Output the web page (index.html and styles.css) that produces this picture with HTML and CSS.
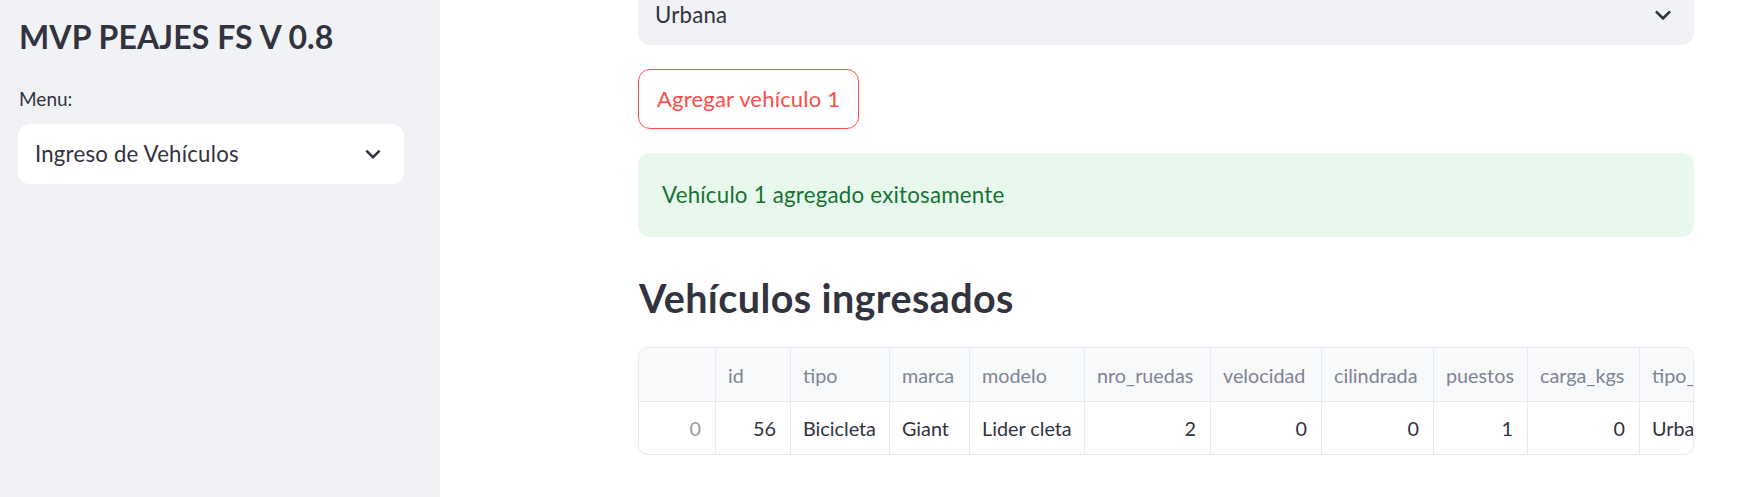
FILE: index.html
```html
<!DOCTYPE html>
<html lang="es">
<head>
<meta charset="utf-8">
<title>MVP PEAJES FS V 0.8</title>
<link rel="stylesheet" href="styles.css">
</head>
<body>
<div class="app">
  <aside class="sidebar">
    <h1 class="side-title">MVP PEAJES FS V 0.8</h1>
    <label class="side-label">Menu:</label>
    <div class="select select-white">
      <span class="select-value">Ingreso de Vehículos</span>
      <svg class="chev chev-side" viewBox="0 0 24 24" aria-hidden="true"><path d="M16.59 8.59L12 13.17 7.41 8.59 6 10l6 6 6-6z"/></svg>
    </div>
  </aside>
  <main class="main">
    <div class="block">
      <div class="select select-grey">
        <span class="select-value">Urbana</span>
        <svg class="chev" viewBox="0 0 24 24" aria-hidden="true"><path d="M16.59 8.59L12 13.17 7.41 8.59 6 10l6 6 6-6z"/></svg>
      </div>
      <div class="btn-row"><button class="btn">Agregar vehículo 1</button></div>
      <div class="alert-success">Vehículo 1 agregado exitosamente</div>
      <h3 class="subheader">Vehículos ingresados</h3>
      <div class="df">
        <div class="df-row df-head">
          <div class="cell"></div>
          <div class="cell">id</div>
          <div class="cell">tipo</div>
          <div class="cell">marca</div>
          <div class="cell">modelo</div>
          <div class="cell">nro_ruedas</div>
          <div class="cell">velocidad</div>
          <div class="cell">cilindrada</div>
          <div class="cell">puestos</div>
          <div class="cell">carga_kgs</div>
          <div class="cell">tipo_vehiculo</div>
        </div>
        <div class="df-row df-body">
          <div class="cell num idx">0</div>
          <div class="cell num">56</div>
          <div class="cell">Bicicleta</div>
          <div class="cell">Giant</div>
          <div class="cell">Lider cleta</div>
          <div class="cell num">2</div>
          <div class="cell num">0</div>
          <div class="cell num">0</div>
          <div class="cell num">1</div>
          <div class="cell num">0</div>
          <div class="cell">Urbana</div>
        </div>
      </div>
    </div>
  </main>
</div>
</body>
</html>
```
FILE: styles.css
```css
* { box-sizing: border-box; }
html, body { margin: 0; padding: 0; }
body {
  font-family: "Lato", "Open Sans", sans-serif;
  color: #31333f;
  background: #ffffff;
  overflow: hidden;
  height: 497px;
}
.app {
  display: flex;
  height: 100vh;
}
.sidebar {
  width: 440px;
  flex: 0 0 440px;
  background: #f0f2f6;
  padding: 17px 36px 0 18px;
  display: flex;
  flex-direction: column;
}
.side-title {
  margin: 0 0 0 1px;
  font-size: 32px;
  line-height: 40px;
  font-weight: 700;
  color: #31333f;
  letter-spacing: 0.1px;
}
.side-label {
  margin: 30px 0 0 1px;
  font-size: 19px;
  line-height: 24px;
  color: #31333f;
}
.select {
  display: flex;
  align-items: center;
  justify-content: space-between;
  height: 60px;
  border-radius: 12px;
  padding: 0 15px 0 17px;
  font-size: 22.2px;
  letter-spacing: 0.22px;
  line-height: 30px;
  color: #31333f;
}
.select-white {
  margin-top: 13px;
  background: #ffffff;
  padding-right: 16px;
}
.select-grey {
  background: #f0f2f6;
}
.chev {
  width: 32px;
  height: 32px;
  fill: #31333f;
  flex: 0 0 auto;
}
.chev-side {
  width: 30px;
  height: 30px;
}
.main {
  flex: 1;
  padding: 0 57px 0 198px;
}
.block {
  margin-top: -15px;
  display: flex;
  flex-direction: column;
}
.btn-row {
  margin-top: 24px;
  display: flex;
}
.btn {
  height: 60px;
  padding: 0 18px;
  border: 1px solid #ff4b4b;
  border-radius: 12px;
  background: #ffffff;
  color: #ff4b4b;
  font-family: "Lato", "Open Sans", sans-serif;
  font-size: 22px;
  letter-spacing: 0.2px;
  line-height: 30px;
}
.alert-success {
  margin-top: 24px;
  height: 84px;
  border-radius: 12px;
  background: #e8f8ed;
  color: #177233;
  font-size: 22.3px;
  letter-spacing: 0.22px;
  line-height: 30px;
  padding: 0 24px;
  display: flex;
  align-items: center;
}
.subheader {
  margin: 36px 0 0 1px;
  font-size: 39.5px;
  letter-spacing: 0.4px;
  line-height: 50px;
  font-weight: 700;
  color: #31333f;
}
.df {
  margin-top: 24px;
  border: 1px solid #e6e9ef;
  border-radius: 10px;
  overflow: hidden;
  width: 1056px;
}
.df-row {
  display: grid;
  grid-template-columns: 77px 75px 99px 80px 115px 126px 111px 112px 94px 112px 160px;
  font-size: 19.8px;
}
.df-head {
  background: #f8f9fb;
  color: #808495;
  height: 54px;
  border-bottom: 1px solid #e6e9ef;
}
.df-body {
  height: 52px;
  color: #31333f;
}
.cell {
  border-right: 1px solid #e6e9ef;
  padding: 0 12px;
  display: flex;
  align-items: center;
  white-space: nowrap;
  overflow: hidden;
}
.df-head .cell { height: 53px; }
.df-body .cell { height: 52px; }
.cell.num {
  justify-content: flex-end;
  padding-right: 14px;
}
.cell.idx {
  color: #9a9ca6;
}
```
